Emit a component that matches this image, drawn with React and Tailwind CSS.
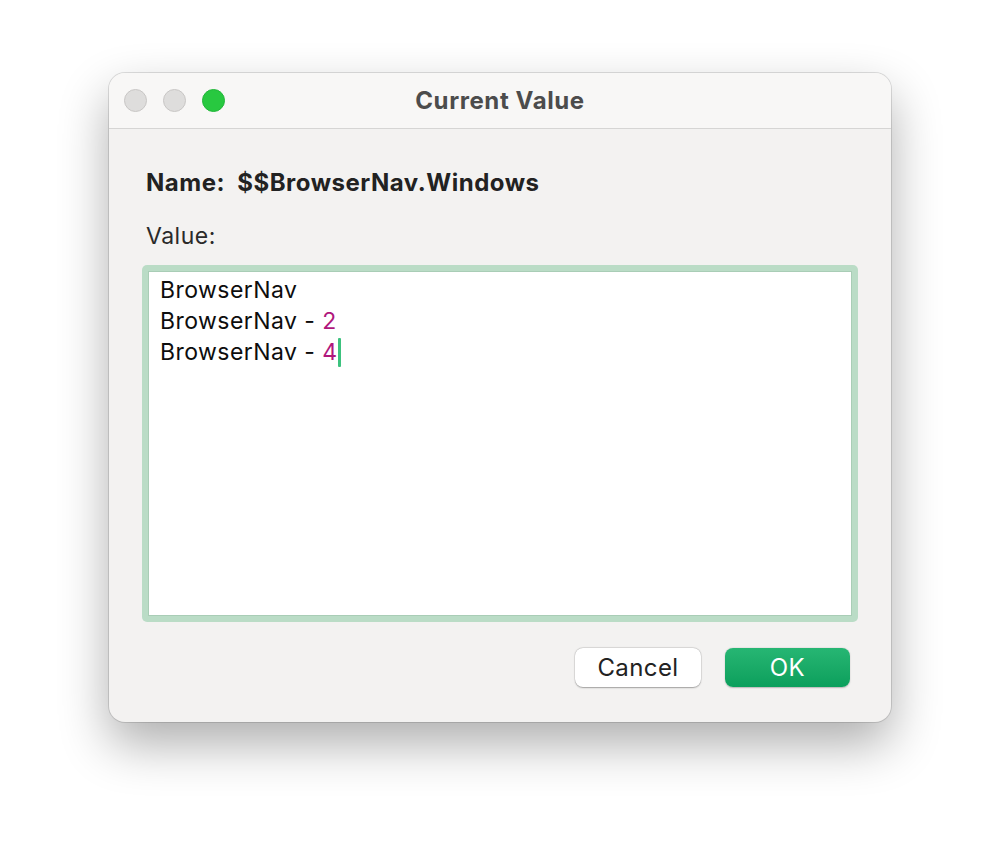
import React from 'react';

const font = { fontFamily: 'Inter, "Liberation Sans", sans-serif' };

const Light = ({ color }) => (
  <span className={`block w-[23px] h-[23px] rounded-full border ${color}`} />
);

const App = () => {
  return (
    <div className="w-[1000px] h-[866px] bg-white pt-[73px] pl-[109px]" style={font}>
      <div className="w-[782px] h-[649px] rounded-[16px] bg-[#f3f2f1] shadow-[0_22px_50px_rgba(0,0,0,0.32),0_0_0_1px_rgba(0,0,0,0.12)] flex flex-col overflow-hidden">
        <div className="relative h-[56px] shrink-0 bg-[#f8f7f6] border-b border-[#d6d5d4] flex items-center pl-[15px] gap-[16px]">
          <Light color="bg-[#dedddc] border-[#c8c6c5]" />
          <Light color="bg-[#dedddc] border-[#c8c6c5]" />
          <Light color="bg-[#28c840] border-[#22b639]" />
          <div className="absolute inset-0 flex items-center justify-center pointer-events-none">
            <span className="text-[24px] font-bold text-[#4c4c4c] tracking-[0.6px]">Current Value</span>
          </div>
        </div>

        <div className="flex-1 flex flex-col px-[33px]">
          <div className="mt-[39px] pl-[4px] text-[24px] leading-[30px] font-bold text-[#222222] tracking-[0.5px] whitespace-pre">
            {'Name:  $$BrowserNav.Windows'}
          </div>
          <div className="mt-[24px] pl-[4px] text-[23px] leading-[28px] text-[#2a2a2a] tracking-[0.5px]">Value:</div>

          <div className="mt-[15px] h-[357px] rounded-[5px] bg-[#badcc6] p-[6px]">
            <div className="h-full bg-white border border-[#a9cdb6] pl-[11px] pt-[3px] text-[23px] leading-[31px] tracking-[0.45px] text-[#0d0d0d]">
              <div>BrowserNav</div>
              <div>
                BrowserNav - <span className="text-[#b0177c]">2</span>
              </div>
              <div className="flex items-center">
                <span className="whitespace-pre">BrowserNav - </span>
                <span className="text-[#b0177c]">4</span>
                <span className="inline-block w-[3px] h-[29px] bg-[#3cc27e] rounded-[1px]" />
              </div>
            </div>
          </div>

          <div className="mt-[26px] flex justify-end gap-[24px] pr-[8px]">
            <button className="w-[126px] h-[39px] rounded-[8px] bg-white text-[24px] tracking-[0.4px] text-[#222222] shadow-[0_0.5px_1.5px_rgba(0,0,0,0.3),0_0_0_0.5px_rgba(0,0,0,0.1)]">
              Cancel
            </button>
            <button className="w-[125px] h-[39px] rounded-[8px] bg-gradient-to-b from-[#26b673] to-[#0a9f5c] text-[24px] tracking-[0.4px] text-white shadow-[0_0.5px_1.5px_rgba(0,0,0,0.25)]">
              OK
            </button>
          </div>
        </div>
      </div>
    </div>
  );
};

export default App;
